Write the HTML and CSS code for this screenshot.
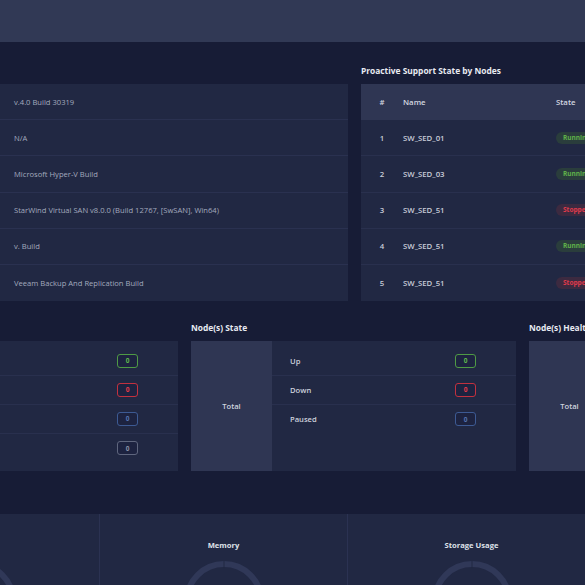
FILE: index.html
```html
<!DOCTYPE html>
<html lang="en">
<head>
<meta charset="utf-8">
<title>Dashboard</title>
<link rel="stylesheet" href="styles.css">
</head>
<body>
<div class="page">
  <header class="topbar"></header>
  <main class="main">
    <div class="row row-1">
      <section class="section sec-versions">
        <h2 class="section-title">&nbsp;</h2>
        <div class="card list-card">
          <div class="list-row">v.4.0 Build 30319</div>
          <div class="list-row">N/A</div>
          <div class="list-row">Microsoft Hyper-V Build</div>
          <div class="list-row">StarWind Virtual SAN v8.0.0 (Build 12767, [SwSAN], Win64)</div>
          <div class="list-row">v. Build</div>
          <div class="list-row">Veeam Backup And Replication Build</div>
        </div>
      </section>
      <section class="section sec-support">
        <h2 class="section-title">Proactive Support State by Nodes</h2>
        <div class="card table-card">
          <div class="trow thead">
            <div class="c-num">#</div>
            <div class="c-name">Name</div>
            <div class="c-state">State</div>
          </div>
          <div class="trow">
            <div class="c-num">1</div>
            <div class="c-name">SW_SED_01</div>
            <div class="c-state"><span class="pill pill-ok">Running</span></div>
          </div>
          <div class="trow">
            <div class="c-num">2</div>
            <div class="c-name">SW_SED_03</div>
            <div class="c-state"><span class="pill pill-ok">Running</span></div>
          </div>
          <div class="trow">
            <div class="c-num">3</div>
            <div class="c-name">SW_SED_51</div>
            <div class="c-state"><span class="pill pill-bad">Stopped</span></div>
          </div>
          <div class="trow">
            <div class="c-num">4</div>
            <div class="c-name">SW_SED_51</div>
            <div class="c-state"><span class="pill pill-ok">Running</span></div>
          </div>
          <div class="trow last">
            <div class="c-num">5</div>
            <div class="c-name">SW_SED_51</div>
            <div class="c-state"><span class="pill pill-bad">Stopped</span></div>
          </div>
        </div>
      </section>
    </div>

    <div class="row row-2">
      <section class="section sec-small">
        <h2 class="section-title">&nbsp;</h2>
        <div class="card stat-card">
          <div class="stat-rows">
            <div class="stat-row"><span class="stat-label"></span><span class="badge b-green">0</span></div>
            <div class="stat-row"><span class="stat-label"></span><span class="badge b-red">0</span></div>
            <div class="stat-row"><span class="stat-label"></span><span class="badge b-blue">0</span></div>
            <div class="stat-row"><span class="stat-label"></span><span class="badge b-grey">0</span></div>
          </div>
        </div>
      </section>
      <section class="section sec-state">
        <h2 class="section-title">Node(s) State</h2>
        <div class="card stat-card">
          <div class="total">Total</div>
          <div class="stat-rows">
            <div class="stat-row"><span class="stat-label">Up</span><span class="badge b-green">0</span></div>
            <div class="stat-row"><span class="stat-label">Down</span><span class="badge b-red">0</span></div>
            <div class="stat-row"><span class="stat-label">Paused</span><span class="badge b-blue">0</span></div>
          </div>
        </div>
      </section>
      <section class="section sec-health">
        <h2 class="section-title">Node(s) Health</h2>
        <div class="card stat-card">
          <div class="total">Total</div>
          <div class="stat-rows"></div>
        </div>
      </section>
    </div>

    <div class="row row-3">
      <div class="card gauge-card">
        <div class="gauge-col">
          <div class="gauge-title">CPU</div>
          <svg class="gauge" viewBox="0 0 80 80" width="80" height="80"><circle cx="40" cy="40" r="37" fill="none" stroke="#303858" stroke-width="6"/><rect x="39.5" y="0" width="1" height="8" fill="#212843"/></svg>
        </div>
        <div class="gauge-col">
          <div class="gauge-title">Memory</div>
          <svg class="gauge" viewBox="0 0 80 80" width="80" height="80"><circle cx="40" cy="40" r="37" fill="none" stroke="#303858" stroke-width="6"/><rect x="39.5" y="0" width="1" height="8" fill="#212843"/></svg>
        </div>
        <div class="gauge-col">
          <div class="gauge-title">Storage Usage</div>
          <svg class="gauge" viewBox="0 0 80 80" width="80" height="80"><circle cx="40" cy="40" r="37" fill="none" stroke="#303858" stroke-width="6"/><rect x="39.5" y="0" width="1" height="8" fill="#212843"/></svg>
        </div>
      </div>
    </div>
  </main>
</div>
</body>
</html>
```

FILE: styles.css
```css
* { box-sizing: border-box; margin: 0; padding: 0; }

html, body {
  width: 585px;
  height: 585px;
  overflow: hidden;
  background: #171c36;
}

body {
  font-family: "Open Sans", "Liberation Sans", sans-serif;
  color: #c9cdd9;
}

.page {
  width: 585px;
  height: 585px;
  overflow: hidden;
}

.topbar {
  height: 42px;
  background: #313955;
}

.main {
  padding-top: 23px;
}

.row {
  display: flex;
  gap: 13px;
}

.section {
  display: flex;
  flex-direction: column;
  flex: none;
}

.section-title {
  font-size: 8.4px;
  line-height: 12px;
  font-weight: 700;
  color: #e8eaf1;
  margin-bottom: 7px;
  white-space: nowrap;
}

.card {
  background: #212843;
}

/* row 1 */
.sec-versions { width: 348px; }
.sec-support { width: 300px; }

.list-row {
  height: 36.2px;
  display: flex;
  align-items: center;
  padding-left: 14px;
  font-size: 7.6px;
  color: #a3aabe;
  border-bottom: 1px solid #2a3150;
  white-space: nowrap;
}
.list-row:last-child { border-bottom: none; }

.trow {
  display: flex;
  align-items: center;
  height: 36.2px;
  border-bottom: 1px solid #29304e;
  font-size: 7.8px;
  font-weight: 600;
  color: #c8ccd8;
}
.trow.last { border-bottom: none; }
.thead {
  background: #2f3653;
  border-bottom: none;
  color: #d3d6e0;
}
.c-num { width: 42px; text-align: center; }
.c-name { width: 153px; }
.c-state { flex: 1; }

.pill {
  display: inline-block;
  height: 12px;
  line-height: 12px;
  padding: 0 7px;
  border-radius: 6px;
  font-size: 6.5px;
  font-weight: 700;
}
.pill-ok { background: #2a3d3c; color: #5fb14a; }
.pill-bad { background: #3c2a40; color: #e03a4b; }

/* row 2 */
.row-2 { margin-top: 21px; }
.sec-small { width: 178px; }
.sec-state { width: 325px; }
.sec-health { width: 200px; }

.stat-card {
  height: 130px;
  display: flex;
}

.total {
  width: 81px;
  flex: none;
  background: #2f3653;
  display: flex;
  align-items: center;
  justify-content: center;
  font-size: 7.6px;
  font-weight: 600;
  color: #d0d4df;
}

.stat-rows {
  flex: 1;
  padding-top: 5.5px;
}

.stat-row {
  height: 29px;
  display: flex;
  align-items: center;
  justify-content: space-between;
  padding: 0 40px 0 18px;
  border-bottom: 1px solid #29304e;
}
.stat-row:last-child { border-bottom: none; }

.stat-label {
  font-size: 7.6px;
  font-weight: 600;
  color: #cdd1dc;
}

.badge {
  width: 21px;
  height: 14px;
  border: 1px solid;
  border-radius: 3px;
  display: flex;
  align-items: center;
  justify-content: center;
  font-size: 6.5px;
  font-weight: 700;
  background: #1d2340;
}
.b-green { border-color: #4f9a45; color: #5fb84c; }
.b-red { border-color: #c2313f; color: #e53a4a; }
.b-blue { border-color: #3d5a93; color: #5473b0; }
.b-grey { border-color: #5f667e; color: #8990a6; }

/* row 3 */
.row-3 { margin-top: 43px; }

.gauge-card {
  display: flex;
  margin-left: -148px;
  height: 140px;
}

.gauge-col {
  width: 248px;
  flex: none;
  display: flex;
  flex-direction: column;
  align-items: center;
  padding-top: 25px;
  border-right: 1px solid #2b3252;
}

.gauge-title {
  font-size: 7.6px;
  line-height: 12px;
  font-weight: 700;
  color: #dfe2ea;
  white-space: nowrap;
}

.gauge {
  margin-top: 10px;
  display: block;
  flex: none;
  width: 80px;
  height: 80px;
}
```
